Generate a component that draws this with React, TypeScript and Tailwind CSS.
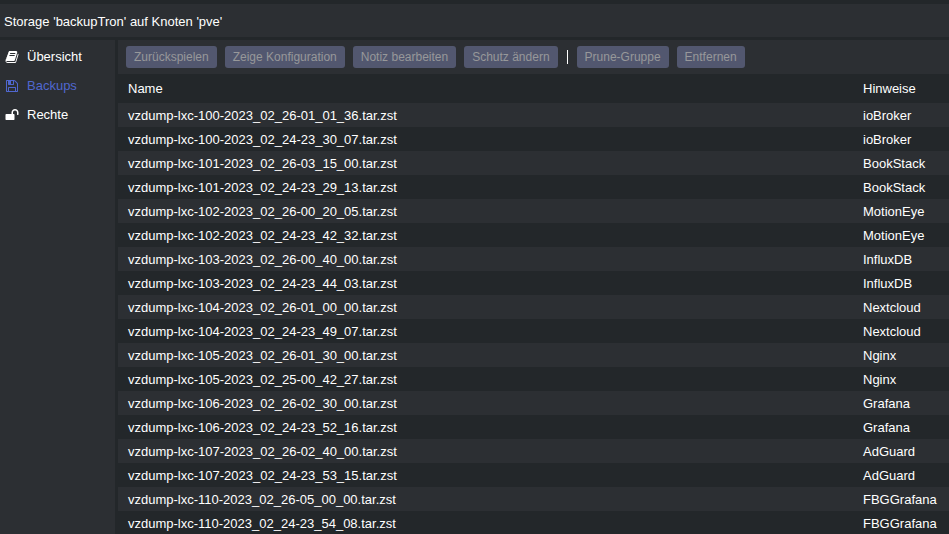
import React from 'react';

const BookIcon = () => (
  <svg viewBox="0 0 1792 1792" className="h-3.5 w-3.5 shrink-0" fill="currentColor" aria-hidden="true">
    <path transform="translate(64 0)" d="M1639 478q40 57 18 129l-275 906q-19 64-76.5 107.5t-122.5 43.5h-923q-77 0-148.5-53.5t-99.5-131.5q-24-67-2-127 0-4 3-27t4-37q1-8-3-21.5t-3-19.5q2-11 8-21t16.5-23.5 16.5-23.5q23-38 45-91.5t30-91.5q3-10 .5-30t-.5-28q3-11 17-28t17-23q21-36 42-92t25-90q1-9-2.5-32t.5-28q4-13 22-30.5t22-22.5q19-26 42.5-84.5t27.5-96.5q1-8-3-25.5t-2-26.5q2-8 9-18t18-23 17-21q8-12 16.5-30.5t15-35 16-36 19.5-32 26.5-23.5 36-11.5 47.5 5.5l-1 3q38-9 51-9h761q74 0 114 56t18 130l-274 906q-36 119-71.5 153.5t-128.5 34.5h-869q-27 0-38 15-11 16-1 43 24 70 144 70h923q29 0 56-15.5t35-41.5l300-987q7-22 5-57 38 15 59 43zm-1064 2q-4 13 2 22.5t20 9.5h608q13 0 25.5-9.5t16.5-22.5l21-64q4-13-2-22.5t-20-9.5h-608q-13 0-25.5 9.5t-16.5 22.5zm-83 256q-4 13 2 22.5t20 9.5h608q13 0 25.5-9.5t16.5-22.5l21-64q4-13-2-22.5t-20-9.5h-608q-13 0-25.5 9.5t-16.5 22.5z" />
  </svg>
);

const FloppyIcon = () => (
  <svg viewBox="0 0 1792 1792" className="h-3.5 w-3.5 shrink-0" fill="currentColor" aria-hidden="true">
    <path transform="translate(128 0)" d="M384 1536h768v-384h-768v384zm896 0h128v-896q0-14-10-38.5t-20-34.5l-281-281q-10-10-34-20t-39-10v416q0 40-28 68t-68 28h-576q-40 0-68-28t-28-68v-416h-128v1280h128v-416q0-40 28-68t68-28h832q40 0 68 28t28 68v416zm-384-928v-320q0-13-9.5-22.5t-22.5-9.5h-192q-13 0-22.5 9.5t-9.5 22.5v320q0 13 9.5 22.5t22.5 9.5h192q13 0 22.5-9.5t9.5-22.5zm640 32v928q0 40-28 68t-68 28h-1344q-40 0-68-28t-28-68v-1344q0-40 28-68t68-28h928q40 0 88 20t76 48l280 280q28 28 48 76t20 88z" />
  </svg>
);

const UnlockIcon = () => (
  <svg viewBox="0 0 1792 1792" className="h-3.5 w-3.5 shrink-0" fill="currentColor" aria-hidden="true">
    <path transform="translate(64 0)" d="M1664 576v256q0 26-19 45t-45 19h-64q-26 0-45-19t-19-45v-256q0-106-75-181t-181-75-181 75-75 181v192h96q40 0 68 28t28 68v576q0 40-28 68t-68 28h-960q-40 0-68-28t-28-68v-576q0-40 28-68t68-28h672v-192q0-185 131.5-316.5t316.5-131.5 316.5 131.5 131.5 316.5z" />
  </svg>
);

const navItems = [
  { label: 'Übersicht', icon: BookIcon },
  { label: 'Backups', icon: FloppyIcon, active: true },
  { label: 'Rechte', icon: UnlockIcon },
];

const backups = [
  { name: 'vzdump-lxc-100-2023_02_26-01_01_36.tar.zst', note: 'ioBroker' },
  { name: 'vzdump-lxc-100-2023_02_24-23_30_07.tar.zst', note: 'ioBroker' },
  { name: 'vzdump-lxc-101-2023_02_26-03_15_00.tar.zst', note: 'BookStack' },
  { name: 'vzdump-lxc-101-2023_02_24-23_29_13.tar.zst', note: 'BookStack' },
  { name: 'vzdump-lxc-102-2023_02_26-00_20_05.tar.zst', note: 'MotionEye' },
  { name: 'vzdump-lxc-102-2023_02_24-23_42_32.tar.zst', note: 'MotionEye' },
  { name: 'vzdump-lxc-103-2023_02_26-00_40_00.tar.zst', note: 'InfluxDB' },
  { name: 'vzdump-lxc-103-2023_02_24-23_44_03.tar.zst', note: 'InfluxDB' },
  { name: 'vzdump-lxc-104-2023_02_26-01_00_00.tar.zst', note: 'Nextcloud' },
  { name: 'vzdump-lxc-104-2023_02_24-23_49_07.tar.zst', note: 'Nextcloud' },
  { name: 'vzdump-lxc-105-2023_02_26-01_30_00.tar.zst', note: 'Nginx' },
  { name: 'vzdump-lxc-105-2023_02_25-00_42_27.tar.zst', note: 'Nginx' },
  { name: 'vzdump-lxc-106-2023_02_26-02_30_00.tar.zst', note: 'Grafana' },
  { name: 'vzdump-lxc-106-2023_02_24-23_52_16.tar.zst', note: 'Grafana' },
  { name: 'vzdump-lxc-107-2023_02_26-02_40_00.tar.zst', note: 'AdGuard' },
  { name: 'vzdump-lxc-107-2023_02_24-23_53_15.tar.zst', note: 'AdGuard' },
  { name: 'vzdump-lxc-110-2023_02_26-05_00_00.tar.zst', note: 'FBGGrafana' },
  { name: 'vzdump-lxc-110-2023_02_24-23_54_08.tar.zst', note: 'FBGGrafana' },
];

const ToolbarButton = ({ children }: { children: React.ReactNode }) => (
  <button
    type="button"
    disabled
    className="h-[22px] rounded-[3px] bg-[#52576f] px-2 text-xs whitespace-nowrap text-[#97989a]"
  >
    {children}
  </button>
);

const Sidebar = () => (
  <nav className="w-[115px] shrink-0 bg-[#2c2f33]">
    <ul className="pt-0.5">
      {navItems.map(({ label, icon: Icon, active }) => (
        <li key={label}>
          <a
            href="#"
            className={`flex h-[29px] items-center gap-2 pl-[5px] ${active ? 'text-[#5067cf]' : 'text-white'}`}
          >
            <Icon />
            {label}
          </a>
        </li>
      ))}
    </ul>
  </nav>
);

const BackupTable = () => (
  <table className="w-full table-fixed border-collapse text-left">
    <thead>
      <tr className="h-[29px]">
        <th className="px-2.5 py-0 font-normal">Name</th>
        <th className="w-24 px-2.5 py-0 font-normal">Hinweise</th>
      </tr>
    </thead>
    <tbody>
      {backups.map((backup) => (
        <tr key={backup.name} className="h-6 odd:bg-[#2c2f33]">
          <td className="px-2.5 pt-0.5 pb-0">{backup.name}</td>
          <td className="px-2.5 pt-0.5 pb-0">{backup.note}</td>
        </tr>
      ))}
    </tbody>
  </table>
);

const App = () => (
  <div className="flex min-h-screen flex-col bg-[#23272a] pt-1 font-['Liberation_Sans',Arial,sans-serif] text-[13px] leading-4 text-white">
    <header className="flex h-[33px] items-center bg-[#2c2f33] px-1 pt-0.5">
      <h1>Storage 'backupTron' auf Knoten 'pve'</h1>
    </header>

    <div className="mt-[3px] flex flex-1 gap-[3px]">
      <Sidebar />
      <main className="min-w-0 flex-1">
        <div className="flex h-[34px] items-center gap-2 bg-[#2c2f33] px-2">
          <ToolbarButton>Zurückspielen</ToolbarButton>
          <ToolbarButton>Zeige Konfiguration</ToolbarButton>
          <ToolbarButton>Notiz bearbeiten</ToolbarButton>
          <ToolbarButton>Schutz ändern</ToolbarButton>
          <div className="mx-px h-3.5 w-px bg-white" />
          <ToolbarButton>Prune-Gruppe</ToolbarButton>
          <ToolbarButton>Entfernen</ToolbarButton>
        </div>
        <BackupTable />
      </main>
    </div>
  </div>
);

export default App;
